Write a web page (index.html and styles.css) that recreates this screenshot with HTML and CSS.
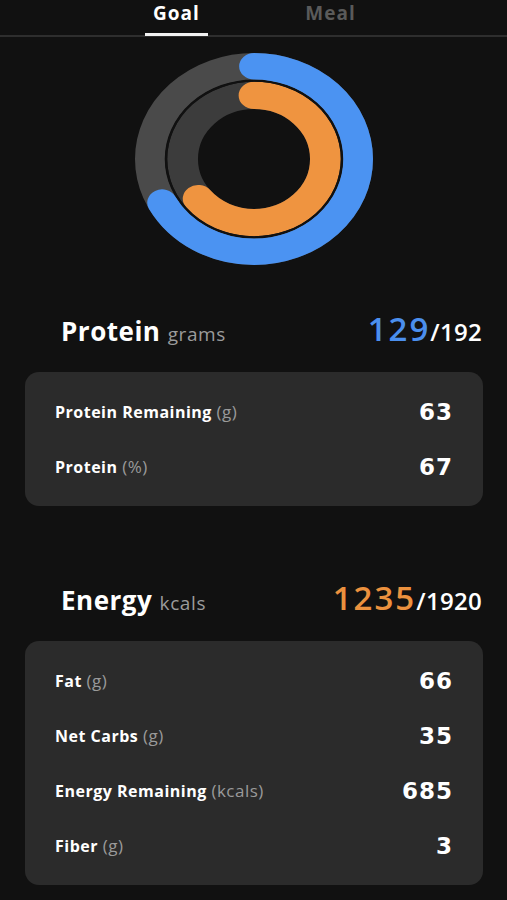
FILE: index.html
```html
<!DOCTYPE html>
<html lang="en">
<head>
    <meta charset="UTF-8">
    <meta name="viewport" content="width=device-width, initial-scale=1.0">
    <title>Goal</title>
    <link rel="stylesheet" href="styles.css">
</head>
<body>
    <div class="tabs">
        <div class="tab active">Goal</div>
        <div class="tab">Meal</div>
    </div>

    <div class="rings">
        <svg width="238" height="212" viewBox="0 0 240 240" preserveAspectRatio="none">
            <!-- outer track + protein -->
            <circle cx="120" cy="120" r="105" fill="none" stroke="#4a4a4a" stroke-width="30"/>
            <circle cx="120" cy="120" r="105" fill="none" stroke="#4b93f2" stroke-width="30"
                    stroke-linecap="round" pathLength="100" stroke-dasharray="67.2 100"
                    transform="rotate(-90 120 120)"/>
            <!-- inner track + energy -->
            <circle cx="120" cy="120" r="72" fill="none" stroke="#3c3c3c" stroke-width="31"/>
            <circle cx="120" cy="120" r="72" fill="none" stroke="#ef9440" stroke-width="31"
                    stroke-linecap="round" pathLength="100" stroke-dasharray="64.3 100"
                    transform="rotate(-90 120 120)"/>
            <circle cx="120" cy="120" r="88.5" fill="none" stroke="#111" stroke-width="2"/>
        </svg>
    </div>

    <div class="section">
        <div class="heading">
            <div class="title">Protein <span class="unit">grams</span></div>
            <div class="total"><span class="current blue">129</span>/192</div>
        </div>
        <div class="card">
            <div class="row">
                <div class="label">Protein Remaining <span class="unit">(g)</span></div>
                <div class="value">63</div>
            </div>
            <div class="row">
                <div class="label">Protein <span class="unit">(%)</span></div>
                <div class="value">67</div>
            </div>
        </div>
    </div>

    <div class="section energy">
        <div class="heading">
            <div class="title">Energy <span class="unit">kcals</span></div>
            <div class="total"><span class="current orange">1235</span>/1920</div>
        </div>
        <div class="card">
            <div class="row">
                <div class="label">Fat <span class="unit">(g)</span></div>
                <div class="value">66</div>
            </div>
            <div class="row">
                <div class="label">Net Carbs <span class="unit">(g)</span></div>
                <div class="value">35</div>
            </div>
            <div class="row">
                <div class="label">Energy Remaining <span class="unit">(kcals)</span></div>
                <div class="value">685</div>
            </div>
            <div class="row">
                <div class="label">Fiber <span class="unit">(g)</span></div>
                <div class="value">3</div>
            </div>
        </div>
    </div>
</body>
</html>
```

FILE: styles.css
```css
body {
    margin: 0;
    background: #111111;
    color: #ffffff;
    font-family: 'Open Sans', 'Noto Sans', Arial, sans-serif;
}
.tabs {
    display: flex;
    justify-content: center;
    border-bottom: 2px solid #2e2e2e;
}
.tab {
    width: 154px;
    display: flex;
    justify-content: center;
    font-size: 19px;
    font-weight: 700;
    letter-spacing: 1px;
    color: #5a5a5a;
    line-height: 26px;
    height: 35px;
}
.tab.active {
    color: #ffffff;
    position: relative;
}
.tab.active::after {
    content: '';
    position: absolute;
    bottom: -1px;
    width: 63px;
    height: 3px;
    background: #f2f2f2;
}
.rings {
    display: flex;
    justify-content: center;
    padding-top: 16px;
    padding-left: 1px;
}
.rings svg {
    display: block;
}
.section {
    padding: 0 24px 0 25px;
}
.heading {
    display: flex;
    justify-content: space-between;
    align-items: baseline;
    margin-top: 41px;
    padding: 0 1px 0 36px;
    height: 44px;
}
.energy .heading {
    margin-top: 69px;
}
.title {
    font-size: 26px;
    font-weight: 700;
    letter-spacing: 0.5px;
}
.title .unit {
    font-size: 19px;
    font-weight: 400;
    letter-spacing: 0.6px;
    color: #9b9b9b;
}
.total {
    font-size: 24px;
    font-weight: 600;
    letter-spacing: 0.3px;
}
.current {
    font-size: 33px;
    letter-spacing: 2px;
}
.blue {
    color: #4b8fee;
}
.orange {
    color: #ec913e;
}
.card {
    margin-top: 22px;
    background: #2b2b2b;
    border-radius: 14px;
    padding: 12px 31px 12px 30px;
}
.row {
    display: flex;
    justify-content: space-between;
    align-items: center;
    height: 55px;
}
.label {
    font-size: 16px;
    font-weight: 700;
    letter-spacing: 0.5px;
}
.label .unit {
    font-size: 17px;
    font-weight: 400;
    color: #9a9a9a;
}
.value {
    font-family: 'DejaVu Sans', 'Open Sans', sans-serif;
    font-size: 23px;
    font-weight: 700;
    letter-spacing: 1px;
    margin-right: -1px;
}
```
